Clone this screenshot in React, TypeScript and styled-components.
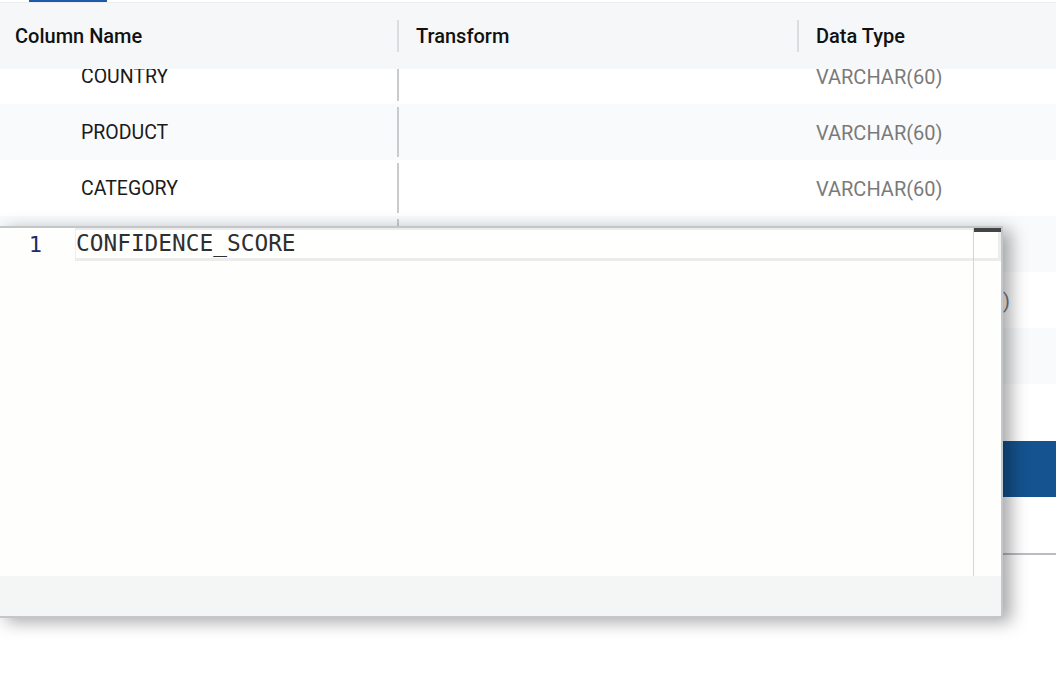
import styled, { createGlobalStyle } from 'styled-components'

const GlobalStyle = createGlobalStyle`
  html, body {
    margin: 0;
    padding: 0;
    background: #ffffff;
    font-family: Roboto, "Liberation Sans", sans-serif;
    overflow: hidden;
  }
`

const Page = styled.div`
  position: relative;
  width: 1056px;
  height: 698px;
  overflow: hidden;
  background: #ffffff;
`
const TabBar = styled.div`
  height: 3px;
  display: flex;
  padding-left: 29px;
  border-bottom: 1px solid #eceef1;
  box-sizing: border-box;
`
const ActiveTab = styled.div`
  width: 78px;
  height: 2px;
  background: #1d5ba8;
`
const Table = styled.div`
  display: flex;
  flex-direction: column;
`
const HeaderRow = styled.div`
  position: relative;
  z-index: 1;
  height: 66px;
  display: grid;
  grid-template-columns: 397px 400px 1fr;
  align-items: center;
  background: #f6f7f9;
`
const HeaderCell = styled.div<{ $sep?: boolean }>`
  height: 32px;
  display: flex;
  align-items: center;
  padding-left: ${(p) => (p.$sep ? '17px' : '15px')};
  border-left: ${(p) => (p.$sep ? '2px solid #dcdde0' : 'none')};
  font-size: 20px;
  font-weight: 500;
  color: #111111;
`
const BodyViewport = styled.div`
  height: 371px;
  overflow: hidden;
`
const Rows = styled.div`
  margin-top: -21px;
`
const Row = styled.div<{ $alt?: boolean }>`
  height: 56px;
  display: grid;
  grid-template-columns: 397px 400px 1fr;
  align-items: center;
  background: ${(p) => (p.$alt ? '#f9fafc' : '#ffffff')};
`
const NameCell = styled.div`
  padding-left: 81px;
  padding-top: 1px;
  font-size: 19.5px;
  line-height: 24px;
  color: #1b1b1b;
`
const TransformCell = styled.div`
  height: 50px;
  border-left: 2px solid #c9cbce;
`
const TypeCell = styled.div`
  padding-left: 19px;
  padding-top: 1px;
  font-size: 20px;
  line-height: 24px;
  color: #7a7a7a;
  white-space: nowrap;
`
const Footer = styled.div`
  height: 112px;
  display: flex;
  flex-direction: column;
  align-items: flex-end;
  padding-top: 1px;
  border-bottom: 2px solid #b9bdc2;
`
const PrimaryButton = styled.button`
  width: 300px;
  height: 56px;
  border: 0;
  padding: 0 0 0 24px;
  text-align: left;
  background: #14538f;
  color: #ffffff;
  font-family: Roboto, sans-serif;
  font-size: 18px;
  font-weight: 500;
  margin-right: -150px;
`

const EditorPopup = styled.div`
  position: absolute;
  left: -2px;
  top: 226px;
  width: 1001px;
  height: 388px;
  display: flex;
  flex-direction: column;
  background: #fefefc;
  border: 2px solid #c3c7cc;
  box-shadow: 8px 4px 16px rgba(0, 0, 0, 0.34);
  z-index: 5;
`
const EditorBody = styled.div`
  position: relative;
  flex: 1;
  display: grid;
  grid-template-columns: 75px 1fr;
  align-content: start;
`
const Gutter = styled.div`
  height: 33px;
  display: flex;
  align-items: center;
  justify-content: flex-end;
  padding-right: 33px;
  font-family: "DejaVu Sans Mono", "Liberation Mono", monospace;
  font-size: 22px;
  color: #1b2b6e;
`
const CurrentLine = styled.div`
  height: 33px;
  box-sizing: border-box;
  border: 3px solid #ececec;
  border-left-width: 1px;
  border-top-width: 2px;
  background: #fffffe;
  font-family: "DejaVu Sans Mono", "Liberation Mono", monospace;
  font-size: 22.8px;
  line-height: 27px;
  color: #2f2f2f;
  white-space: pre;
`
const ScrollTrack = styled.div`
  position: absolute;
  top: 0;
  right: 0;
  bottom: 0;
  width: 27px;
  border-left: 1px solid #d5d5d5;
`
const ScrollThumb = styled.div`
  height: 4px;
  background: #444444;
`
const EditorFooter = styled.div`
  height: 40px;
  background: #f4f6f6;
`

const rows = [
  { name: 'COUNTRY', type: 'VARCHAR(60)' },
  { name: 'PRODUCT', type: 'VARCHAR(60)' },
  { name: 'CATEGORY', type: 'VARCHAR(60)' },
  { name: 'SALES_AMOUNT', type: 'NUMBER(38,2)' },
  { name: 'CONFIDENCE_SCORE', type: 'VARCHAR(16777216)' },
  { name: 'ORDER_DATE', type: 'DATE' },
  { name: 'QUANTITY', type: 'NUMBER(38,0)' },
]

export default function App() {
  return (
    <Page>
      <GlobalStyle />
      <TabBar>
        <ActiveTab />
      </TabBar>
      <Table>
        <HeaderRow>
          <HeaderCell>Column Name</HeaderCell>
          <HeaderCell $sep>Transform</HeaderCell>
          <HeaderCell $sep>Data Type</HeaderCell>
        </HeaderRow>
        <BodyViewport>
          <Rows>
            {rows.map((r, i) => (
              <Row key={r.name} $alt={i % 2 === 1}>
                <NameCell>{r.name}</NameCell>
                <TransformCell />
                <TypeCell>{r.type}</TypeCell>
              </Row>
            ))}
          </Rows>
        </BodyViewport>
        <Footer>
          <PrimaryButton>Apply</PrimaryButton>
        </Footer>
      </Table>
      <EditorPopup>
        <EditorBody>
          <Gutter>1</Gutter>
          <CurrentLine>CONFIDENCE_SCORE</CurrentLine>
          <ScrollTrack>
            <ScrollThumb />
          </ScrollTrack>
        </EditorBody>
        <EditorFooter />
      </EditorPopup>
    </Page>
  )
}
